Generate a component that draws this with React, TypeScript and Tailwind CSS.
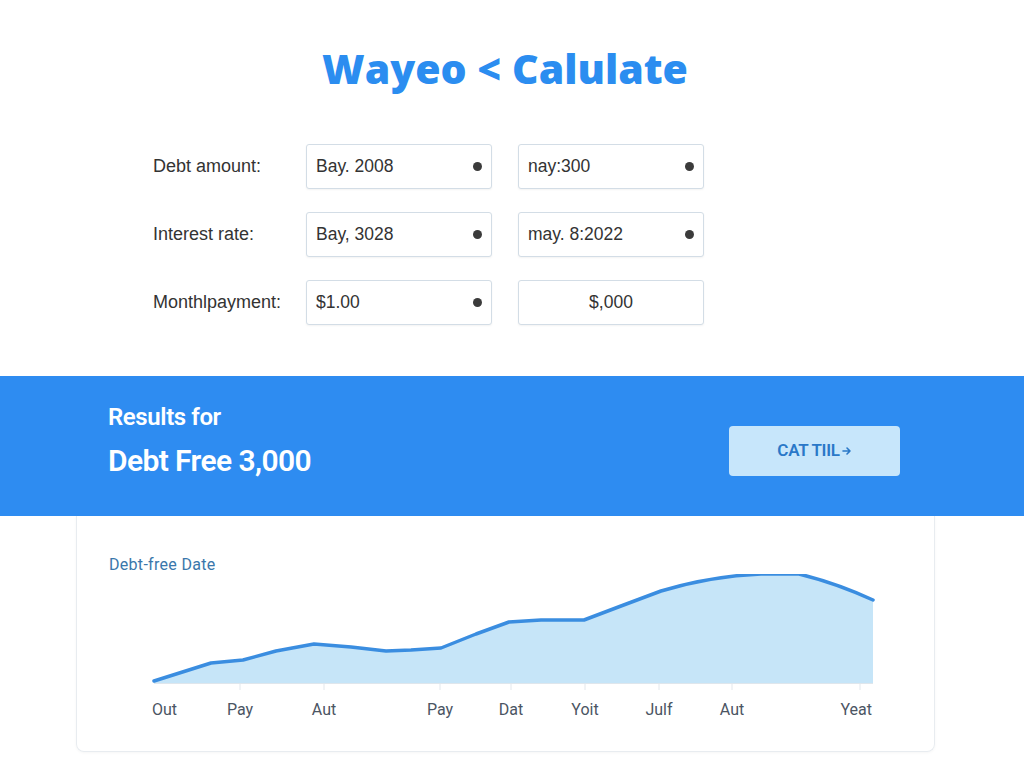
const rows = [
  { label: "Debt amount:", a: "Bay. 2008", b: "nay:300", bDot: true },
  { label: "Interest rate:", a: "Bay, 3028", b: "may. 8:2022", bDot: true },
  { label: "Monthlpayment:", a: "$1.00", b: "$,000", bDot: false },
];

const ticks = [
  { x: 151, label: "Out", anchor: "start", tick: false },
  { x: 239, label: "Pay", anchor: "middle", tick: true },
  { x: 323, label: "Aut", anchor: "middle", tick: true },
  { x: 439, label: "Pay", anchor: "middle", tick: true },
  { x: 510, label: "Dat", anchor: "middle", tick: true },
  { x: 584, label: "Yoit", anchor: "middle", tick: true },
  { x: 658, label: "Julf", anchor: "middle", tick: true },
  { x: 731, label: "Aut", anchor: "middle", tick: true },
  { x: 871, label: "Yeat", anchor: "end", tick: true },
];

const line =
  "M153,681 L210,663 L242,660 L275,651 L313,644 L350,647 L385,651 L410,650 L440,648 L475,634 L508,622 L540,620 L583,620 L620,606 L660,591 Q710,576 760,574 L798,574 Q835,583 872,600";

function Field({ text, dot, center }: { text: string; dot: boolean; center?: boolean }) {
  return (
    <div
      className={`flex items-center w-[186px] h-[45px] px-[9px] border border-[#d3dde6] rounded-[3px] bg-white shadow-[0_1px_2px_rgba(0,0,0,0.05)] ${
        center ? "justify-center" : "justify-between"
      }`}
    >
      <span className="text-[17.5px] text-[#333] font-['Liberation_Sans',sans-serif]">{text}</span>
      {dot && <span className="w-[9px] h-[9px] rounded-full bg-[#3b3b3b]" />}
    </div>
  );
}

export default function App() {
  return (
    <div className="w-[1024px] h-[768px] bg-white overflow-hidden font-['Roboto',sans-serif]">
      <h1 className="mt-[44px] pr-[14px] text-center text-[41px] leading-[48px] font-extrabold text-[#2b8df0] font-['Open_Sans',sans-serif]">
        Wayeo &lt; Calulate
      </h1>

      <div className="mt-[52px] pl-[153px] flex flex-col gap-[23px]">
        {rows.map((r) => (
          <div key={r.label} className="flex items-center">
            <span className="w-[153px] text-[18px] text-[#333] font-['Liberation_Sans',sans-serif]">
              {r.label}
            </span>
            <div className="flex gap-[26px]">
              <Field text={r.a} dot />
              <Field text={r.b} dot={r.bDot} center={!r.bDot} />
            </div>
          </div>
        ))}
      </div>

      <div className="mt-[51px] h-[140px] bg-[#2e8cf1] flex items-center justify-between pl-[108px] pr-[124px]">
        <div className="flex flex-col text-white font-semibold pb-[11px]">
          <span className="text-[24px] leading-[28px] tracking-[-0.4px]">Results for</span>
          <span className="mt-[12px] text-[30px] leading-[36px] tracking-[-0.6px]">Debt Free 3,000</span>
        </div>
        <button className="mt-[10px] flex items-center justify-center w-[171px] h-[50px] rounded-[4px] bg-[#c7e6fb] text-[#2a78c8] text-[17px] font-semibold tracking-[-0.3px]">
          CAT TIIL
          <svg width="10" height="10" viewBox="0 0 10 10" className="ml-[2px]">
            <path d="M1 5h7M5 2l3 3-3 3" fill="none" stroke="#2a78c8" strokeWidth="1.6" strokeLinecap="round" strokeLinejoin="round" />
          </svg>
        </button>
      </div>

      <div className="ml-[76px] mr-[89px] h-[236px] border-x border-b border-[#e8ecf0] rounded-b-[8px] shadow-[0_1px_3px_rgba(0,0,0,0.04)]">
        <div className="pt-[40px] pl-[32px] text-[16px] leading-[18px] tracking-[0.3px] text-[#3a77ab]">Debt-free Date</div>
        <svg width="859" height="160" viewBox="76 574 859 160" className="block">
          <path d={`${line} L872,683 L153,683 Z`} fill="#c6e5f8" />
          <line x1="153" y1="683.5" x2="872" y2="683.5" stroke="#dfe6ec" strokeWidth="1" />
          {ticks
            .filter((t) => t.tick)
            .map((t) => (
              <line
                key={t.x}
                x1={t.anchor === "end" ? 859 : t.x}
                y1="684"
                x2={t.anchor === "end" ? 859 : t.x}
                y2="690"
                stroke="#e2e7ec"
                strokeWidth="1"
              />
            ))}
          <path d={line} fill="none" stroke="#3a8de0" strokeWidth="3.5" strokeLinejoin="round" strokeLinecap="round" />
          {ticks.map((t, i) => (
            <text
              key={i}
              x={t.x}
              y="715"
              textAnchor={t.anchor as "start" | "middle" | "end"}
              fontSize="16"
              fill="#4b5563"
              fontFamily="Roboto, sans-serif"
            >
              {t.label}
            </text>
          ))}
        </svg>
      </div>
    </div>
  );
}
